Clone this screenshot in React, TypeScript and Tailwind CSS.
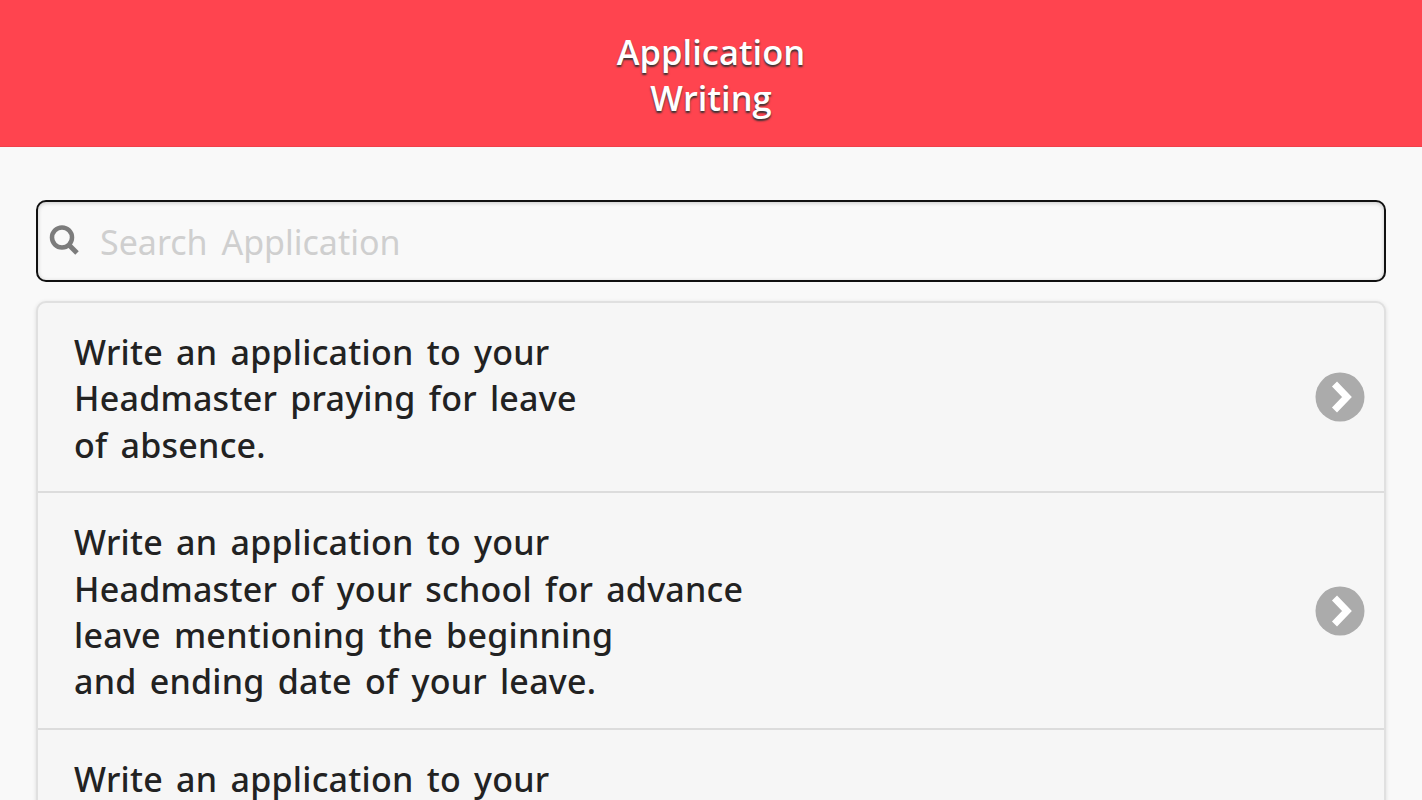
const items = [
  ['Write an application to your', 'Headmaster praying for leave', 'of absence.'],
  [
    'Write an application to your',
    'Headmaster of your school for advance',
    'leave mentioning the beginning',
    'and ending date of your leave.',
  ],
  // only the first line of this row is on screen, the row runs on below the fold
  ['Write an application to your'],
]

function Arrow() {
  return (
    <svg className="w-[50px] h-[50px] shrink-0 mb-[3px]" viewBox="0 0 50 50">
      <circle cx="25" cy="25" r="24.5" fill="#ababab" />
      <path d="M19.5 12 L32 25 L19.5 38" fill="none" stroke="#fff" strokeWidth="7" />
    </svg>
  )
}

export default function App() {
  return (
    <div className="h-[800px] overflow-hidden bg-[#f9f9f9] font-['Noto_Sans','Open_Sans',sans-serif]">
      <header className="h-[147px] bg-[#ff444f] border-b border-[#f0404a] flex flex-col items-center justify-center pt-[4px]">
        <h1 className="text-center font-['Open_Sans','Noto_Sans',sans-serif] text-[34.5px] leading-[46px] font-semibold text-white [text-shadow:0_2px_2px_#333]">
          Application
          <br />
          Writing
        </h1>
      </header>

      <main className="px-[36px] pt-[53px]">
        <div className="h-[82px] rounded-[10px] border-2 border-[#111] shadow-[inset_0_1px_4px_rgba(0,0,0,0.2)] bg-[#f9f9f9] flex items-center pl-[10px]">
          <svg className="w-[32px] h-[32px] text-[#7c7c7c] mb-[2px]" viewBox="0 0 32 32" fill="none" stroke="currentColor">
            <circle cx="14" cy="13.5" r="10" strokeWidth="4.5" />
            <path d="M20.5 20.5 L29 29" strokeWidth="5" />
          </svg>
          <span className="ml-[20px] mt-[3px] text-[34px] [word-spacing:5px] text-[#cfcfcf]">Search Application</span>
        </div>

        <ul className="mt-[19px] rounded-[10px] border-2 border-[#e0e0e0] bg-[#f6f6f6] shadow-[0_1px_4px_rgba(0,0,0,0.12)]">
          {items.map((lines, i) => (
            <li
              key={i}
              className={`flex justify-between pl-[36px] pr-[19px] pt-[26px] pb-[23px] border-b-2 border-[#dcdcdc] ${
                lines.length > 1 ? 'items-center' : 'items-start h-[240px]'
              }`}
            >
              <p className="text-[34px] leading-[46.4px] tracking-[0.25px] [word-spacing:4px] font-medium text-[#222]">
                {lines.map((line) => (
                  <span key={line} className="block whitespace-nowrap">
                    {line}
                  </span>
                ))}
              </p>
              {lines.length > 1 && <Arrow />}
            </li>
          ))}
        </ul>
      </main>
    </div>
  )
}
